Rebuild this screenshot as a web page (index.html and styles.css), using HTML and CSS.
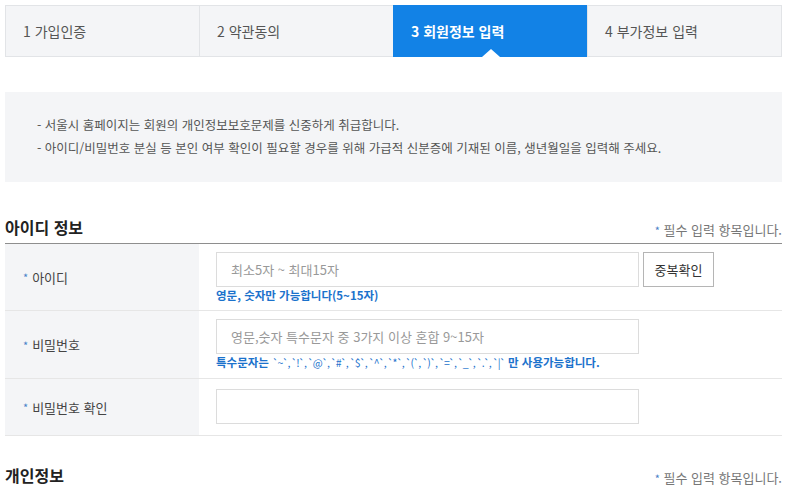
FILE: index.html
```html
<!DOCTYPE html>
<html lang="ko">
<head>
    <meta charset="UTF-8">
    <meta name="viewport" content="width=device-width, initial-scale=1.0">
    <title>회원가입 - 회원정보 입력</title>
    <link rel="stylesheet" href="styles.css">
</head>
<body>
    <div class="wrap">
        <!-- 가입 단계 -->
        <ol class="steps">
            <li>1 가입인증</li>
            <li>2 약관동의</li>
            <li class="on">3 회원정보 입력</li>
            <li>4 부가정보 입력</li>
        </ol>

        <div class="info-box">
            <p>- 서울시 홈페이지는 회원의 개인정보보호문제를 신중하게 취급합니다.</p>
            <p>- 아이디/비밀번호 분실 등 본인 여부 확인이 필요할 경우를 위해 가급적 신분증에 기재된 이름, 생년월일을 입력해 주세요.</p>
        </div>

        <!-- 아이디 정보 -->
        <div class="section-head">
            <h3>아이디 정보</h3>
            <span class="req-note"><em>*</em> 필수 입력 항목입니다.</span>
        </div>
        <div class="form-table">
            <div class="row">
                <div class="th"><em>*</em> 아이디</div>
                <div class="td">
                    <div class="field-line">
                        <input type="text" class="inp" placeholder="최소5자 ~ 최대15자">
                        <button type="button" class="btn-check">중복확인</button>
                    </div>
                    <p class="hint">영문, 숫자만 가능합니다(5~15자)</p>
                </div>
            </div>
            <div class="row">
                <div class="th"><em>*</em> 비밀번호</div>
                <div class="td">
                    <input type="password" class="inp" placeholder="영문,숫자 특수문자 중 3가지 이상 혼합 9~15자">
                    <p class="hint">특수문자는 <span class="chars">`~`, `!`, `@`, `#`, `$`, `^`, `*`, `(`, `)`, `=`, `_`, `.`, `|`</span> 만 사용가능합니다.</p>
                </div>
            </div>
            <div class="row">
                <div class="th"><em>*</em> 비밀번호 확인</div>
                <div class="td td-single">
                    <input type="password" class="inp">
                </div>
            </div>
        </div>

        <!-- 개인정보 -->
        <div class="section-head section-next">
            <h3>개인정보</h3>
            <span class="req-note"><em>*</em> 필수 입력 항목입니다.</span>
        </div>
        <div class="form-table">
            <div class="row">
                <div class="th"></div>
                <div class="td td-single">
                    <input type="text" class="inp">
                </div>
            </div>
        </div>
    </div>
</body>
</html>
```

FILE: styles.css
```css
body {
    margin: 0;
    font-family: "Noto Sans CJK KR", "Noto Sans", sans-serif;
    color: #333;
    background: #fff;
}

.wrap {
    width: 777px;
    margin-left: 5px;
}

/* 단계 표시 */
.steps {
    display: flex;
    list-style: none;
    margin: 5px 0 0;
    padding: 0;
    border: 1px solid #e2e4e7;
    background: #f4f5f7;
}

.steps li {
    flex: 1;
    position: relative;
    height: 50px;
    line-height: 50px;
    padding-left: 17px;
    font-size: 14px;
    color: #555;
    border-left: 1px solid #e2e4e7;
}

.steps li:first-child {
    border-left: none;
}

.steps li.on {
    background: #1282e6;
    border-left-color: #1282e6;
    color: #fff;
    font-weight: bold;
    margin: -1px 0;
    height: 52px;
    line-height: 52px;
}

.steps li.on::after {
    content: "";
    position: absolute;
    left: 50%;
    bottom: 0;
    margin-left: -9px;
    border: 9px solid transparent;
    border-bottom: 8px solid #fff;
    border-top: none;
}

.info-box {
    margin-top: 35px;
    height: 90px;
    box-sizing: border-box;
    padding: 21px 32px 0;
    background: #f4f5f7;
    font-size: 12.5px;
    color: #555;
}

.info-box p {
    margin: 0;
    line-height: 23px;
}

/* 섹션 제목 */
.section-head {
    display: flex;
    justify-content: space-between;
    align-items: flex-start;
    margin-top: 35px;
    height: 26px;
    border-bottom: 1px solid #8e8e8e;
}

.section-head h3 {
    margin: 0;
    font-size: 16px;
    line-height: 20px;
    color: #222;
}

.section-next {
    margin-top: 29px;
    border-bottom-color: #f4f5f7;
}

.req-note {
    padding-top: 3px;
    font-size: 13px;
    line-height: 20px;
    color: #777;
}

em {
    font-style: normal;
    color: #4a80c8;
    font-size: 11px;
}

/* 입력 테이블 */
.row {
    display: flex;
    border-bottom: 1px solid #e6e6e6;
}

.th {
    width: 194px;
    flex-shrink: 0;
    box-sizing: border-box;
    padding-left: 18px;
    display: flex;
    align-items: center;
    gap: 4px;
    background: #f4f5f7;
    font-size: 13px;
    color: #444;
}

.td {
    flex: 1;
    padding: 8px 17px 7px;
}

.td-single {
    padding: 10px 17px 11px;
}

.field-line {
    display: flex;
    gap: 4px;
}

.inp {
    display: block;
    width: 423px;
    height: 35px;
    box-sizing: border-box;
    padding: 0 14px;
    border: 1px solid #dcdcdc;
    font-family: inherit;
    font-size: 13px;
    color: #333;
}

.inp::placeholder {
    color: #999;
}

.btn-check {
    width: 71px;
    height: 35px;
    border: 1px solid #b5b5b5;
    background: #fff;
    font-family: inherit;
    font-size: 13px;
    color: #333;
    cursor: pointer;
}

.hint {
    margin: 0;
    line-height: 16px;
    font-size: 11.5px;
    font-weight: bold;
    color: #1b72cc;
}

.hint .chars {
    font-size: 10.5px;
    font-weight: normal;
    letter-spacing: -1.1px;
}
```
